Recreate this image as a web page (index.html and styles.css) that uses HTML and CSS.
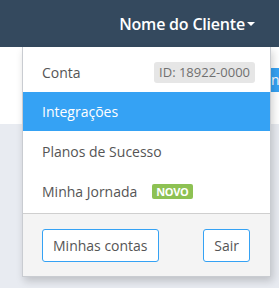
FILE: index.html
```html
<!DOCTYPE html>
<html>
<head lang="pt">
    <meta charset="UTF-8">
    <title>Menu do cliente</title>
    <link rel="stylesheet" href="styles.css">
</head>
<body>

<div id="topbar">
    <span class="user">Nome do Cliente<i class="caret"></i></span>
</div>

<div id="subbar">
    <span class="btn-new">n</span>
</div>

<div id="dropdown">
    <ul class="menu">
        <li>
            <span>Conta</span>
            <span class="tag-id">ID: 18922-0000</span>
        </li>
        <li class="selected">
            <span>Integrações</span>
        </li>
        <li>
            <span>Planos de Sucesso</span>
        </li>
        <li>
            <span>Minha Jornada</span>
            <span class="tag-new">NOVO</span>
        </li>
    </ul>
    <div class="footer">
        <a class="btn">Minhas contas</a>
        <a class="btn">Sair</a>
    </div>
</div>

</body>
</html>
```

FILE: styles.css
```css
* {
    margin: 0;
    padding: 0;
    box-sizing: border-box;
}

ul {
    list-style: none;
}

body {
    background: #e8ebf1;
    font-family: "Open Sans", "Noto Sans", sans-serif;
    overflow: hidden;
}

#topbar {
    height: 47px;
    background: #34495e;
    display: flex;
    justify-content: flex-end;
    align-items: center;
    padding-right: 24px;
}

#topbar .user {
    color: #ffffff;
    font-size: 16px;
    font-weight: 600;
    letter-spacing: -0.2px;
    display: flex;
    align-items: center;
}

#topbar .caret {
    width: 0;
    height: 0;
    margin-left: 2px;
    margin-top: 1px;
    border-left: 4px solid transparent;
    border-right: 4px solid transparent;
    border-top: 4px solid #ffffff;
}

#subbar {
    height: 77px;
    background: #ffffff;
    display: flex;
    justify-content: flex-end;
    padding-top: 21px;
}

#subbar .btn-new {
    height: 24px;
    width: 9px;
    background: #35a2f4;
    color: #ffffff;
    font-size: 14px;
    line-height: 24px;
    padding-left: 1px;
    overflow: hidden;
}

#dropdown {
    position: absolute;
    top: 47px;
    left: 22px;
    width: 249px;
    background: #ffffff;
    border: 1px solid #c9ccd1;
    border-top: none;
    box-shadow: 2px 4px 8px rgba(0, 0, 0, 0.18);
}

.menu {
    padding-top: 5px;
    padding-bottom: 2px;
}

.menu li {
    height: 40px;
    display: flex;
    align-items: center;
    padding: 0 15px 0 19px;
    font-size: 14px;
    color: #555555;
}

.menu li.selected {
    background: #35a2f4;
    color: #ffffff;
    height: 39px;
}

.tag-id {
    margin-left: auto;
    background: #e6e6e6;
    color: #707070;
    font-size: 13px;
    border-radius: 3px;
    padding: 1px 5px;
    line-height: 19px;
}

.tag-new {
    margin-left: 15px;
    background: #8dc153;
    color: #ffffff;
    font-size: 11px;
    font-weight: 700;
    letter-spacing: -0.4px;
    border-radius: 2px;
    padding: 0 5px 0 4px;
    line-height: 15px;
}

.footer {
    background: #f4f4f4;
    border-top: 1px solid #cfcfcf;
    display: flex;
    justify-content: space-between;
    padding: 15px 20px 14px 19px;
}

.btn {
    display: block;
    height: 33px;
    line-height: 31px;
    padding: 0 10px;
    border: 1px solid #35a2f4;
    border-radius: 3px;
    background: #ffffff;
    color: #555555;
    font-size: 14px;
    cursor: pointer;
}
```
